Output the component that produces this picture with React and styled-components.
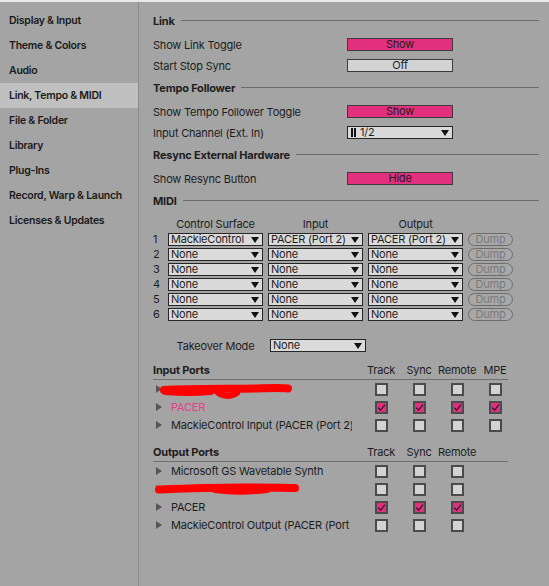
import React from "react";
import styled, { createGlobalStyle } from "styled-components";

const PINK = "#e2307e";

const GlobalStyle = createGlobalStyle`
  html, body {
    margin: 0;
    padding: 0;
    background: #a4a4a4;
  }
  body {
    font-family: Inter, "Liberation Sans", sans-serif;
    font-size: 11px;
    letter-spacing: -0.2px;
    color: #1d1d1d;
  }
  * { box-sizing: border-box; }
`;

const navItems = [
  "Display & Input",
  "Theme & Colors",
  "Audio",
  "Link, Tempo & MIDI",
  "File & Folder",
  "Library",
  "Plug-Ins",
  "Record, Warp & Launch",
  "Licenses & Updates",
];

const midiRows = [
  ["MackieControl", "PACER (Port 2)", "PACER (Port 2)"],
  ["None", "None", "None"],
  ["None", "None", "None"],
  ["None", "None", "None"],
  ["None", "None", "None"],
  ["None", "None", "None"],
];

const inputPorts = [
  { name: "", hidden: true, checks: [false, false, false, false] },
  { name: "PACER", pink: true, checks: [true, true, true, true] },
  { name: "MackieControl Input (PACER (Port 2))", checks: [false, false, false, false] },
];

const outputPorts = [
  { name: "Microsoft GS Wavetable Synth", checks: [false, false, false] },
  { name: "", hidden: true, checks: [false, false, false] },
  { name: "PACER", checks: [true, true, true] },
  { name: "MackieControl Output (PACER (Port 2))", checks: [false, false, false] },
];

const Page = styled.div`
  height: 100vh;
  display: flex;
  flex-direction: column;
`;

const TopStrip = styled.div`
  height: 2px;
  background: #e9e9e9;
`;

const Body = styled.div`
  flex: 1;
  display: flex;
`;

const Sidebar = styled.nav`
  width: 139px;
  padding-top: 6px;
  border-right: 1px solid #8c8c8c;
`;

const NavItem = styled.div`
  height: 25px;
  display: flex;
  align-items: center;
  padding-left: 9px;
  font-size: 10.5px;
  letter-spacing: -0.25px;
  font-weight: 600;
  color: #1a1a1a;
  background: ${(p) => (p.$active ? "#c0c0c0" : "transparent")};
`;

const Main = styled.main`
  flex: 1;
  padding: 7px 10px 0 14px;
`;

const SectionHead = styled.div`
  height: 25px;
  padding-bottom: 2px;
  display: flex;
  align-items: center;
  gap: 6px;
  font-weight: 700;
  &::after {
    content: "";
    flex: 1;
    height: 1px;
    background: #6a6a6a;
  }
`;

const SettingRow = styled.div`
  height: 21px;
  display: grid;
  grid-template-columns: 194px 106px;
  align-items: center;
`;

const Toggle = styled.div`
  height: 13px;
  border: 1px solid #3b3b3b;
  background: ${(p) => (p.$on ? PINK : "#d3d3d3")};
  display: flex;
  align-items: center;
  justify-content: center;
  line-height: 11px;
`;

const Select = styled.div`
  height: 13px;
  width: ${(p) => p.$width || "auto"};
  margin-left: ${(p) => p.$offset || 0};
  border: 1px solid #262626;
  background: #dadada;
  display: flex;
  align-items: center;
  padding: 0 3px 0 2px;
  line-height: 11px;
  white-space: nowrap;
`;

const SelectText = styled.span`
  flex: 1;
`;

const Arrow = styled.span`
  flex: none;
  width: 0;
  height: 0;
  margin-left: 2px;
  border-left: 4px solid transparent;
  border-right: 4px solid transparent;
  border-top: 6px solid #111;
`;

const Bars = styled.span`
  display: inline-flex;
  gap: 1px;
  margin: 0 4px 0 1px;
  span {
    width: 2px;
    height: 9px;
    background: #111;
  }
`;

const MidiHeads = styled.div`
  height: 19px;
  display: grid;
  grid-template-columns: 10px 95px 95px 95px 45px;
  column-gap: 5px;
  align-items: center;
  span {
    text-align: center;
  }
`;

const MidiGrid = styled.div`
  display: grid;
  grid-template-columns: 10px 95px 95px 95px 45px;
  grid-auto-rows: 13px;
  column-gap: 5px;
  row-gap: 2px;
  align-items: center;
`;

const RowNum = styled.span`
  line-height: 13px;
`;

const Dump = styled.div`
  height: 13px;
  border: 1px solid #6c6c6c;
  border-radius: 7px;
  color: #7a7a7a;
  background: #a8a8a8;
  display: flex;
  align-items: center;
  justify-content: center;
  line-height: 11px;
`;

const TakeoverRow = styled(MidiGrid)`
  margin-top: 18px;
`;

const CenterLabel = styled.span`
  text-align: center;
`;

const PortSection = styled.section`
  margin-top: ${(p) => p.$gap};
`;

const PortHead = styled.div`
  width: 355px;
  height: 19px;
  display: grid;
  grid-template-columns: 209px repeat(4, 38px);
  align-items: center;
  border-bottom: 1px solid #6f6f6f;
  span {
    text-align: center;
  }
`;

const PortTitle = styled.span`
  font-weight: 700;
  && {
    text-align: left;
  }
`;

const PortRow = styled.div`
  height: 18px;
  display: grid;
  grid-template-columns: 209px repeat(4, 38px);
  align-items: center;
`;

const PortName = styled.div`
  display: flex;
  align-items: center;
  max-width: 199px;
  white-space: nowrap;
  color: ${(p) => (p.$pink ? "#e83d8a" : "inherit")};
`;

// long port names are cut at the column edge
const PortLabel = styled.span`
  max-width: 181px;
  overflow-x: clip;
  overflow-y: visible;
`;

const Expander = styled.span`
  flex: none;
  width: 0;
  height: 0;
  margin: 0 9px 0 3px;
  border-top: 4px solid transparent;
  border-bottom: 4px solid transparent;
  border-left: 6px solid #555;
`;

const CheckCell = styled.div`
  display: flex;
  justify-content: center;
`;

const Box = styled.div`
  width: 13px;
  height: 13px;
  border: 2px solid #4b4b4b;
  background: ${(p) => (p.$checked ? PINK : "#d3d3d3")};
  display: flex;
  align-items: center;
  justify-content: center;
`;

const Scribble = styled.svg`
  flex: none;
  margin-left: ${(p) => p.$shift};
  overflow: visible;
`;

function Checkbox({ checked }) {
  return (
    <Box $checked={checked}>
      {checked && (
        <svg width="9" height="9" viewBox="0 0 9 9">
          <path d="M1.2 4.6 L3.6 7.2 L8 1.6" fill="none" stroke="#2a1222" strokeWidth="1.2" />
        </svg>
      )}
    </Box>
  );
}

function Dropdown({ children, width, offset }) {
  return (
    <Select $width={width} $offset={offset}>
      <SelectText>{children}</SelectText>
      <Arrow />
    </Select>
  );
}

// red marker strokes covering two device names
function InputScribble() {
  return (
    <Scribble $shift="-12px" width="136" height="18" viewBox="0 0 136 18">
      <path d="M5 10 C30 8.5, 70 9, 96 8.5 C110 8, 122 7.5, 129 8.5" stroke="#ff0000" strokeWidth="8" fill="none" strokeLinecap="round" />
      <path d="M6 12 C20 13, 40 13, 52 12" stroke="#ff0000" strokeWidth="6" fill="none" strokeLinecap="round" />
      <path d="M58 12 C64 17, 72 17, 78 13" stroke="#ff0000" strokeWidth="6" fill="none" strokeLinecap="round" />
    </Scribble>
  );
}

function OutputScribble() {
  return (
    <Scribble $shift="-16px" width="146" height="18" viewBox="0 0 146 18">
      <path d="M4 9.5 C30 8.5, 60 7.5, 90 7.5 C110 7.5, 128 7.5, 140 8" stroke="#ff0000" strokeWidth="8" fill="none" strokeLinecap="round" />
      <path d="M60 9 C75 11, 95 11, 112 9" stroke="#ff0000" strokeWidth="8" fill="none" strokeLinecap="round" />
    </Scribble>
  );
}

function PortList({ title, ports, columns, gap, Hidden }) {
  return (
    <PortSection $gap={gap}>
      <PortHead>
        <PortTitle>{title}</PortTitle>
        {columns.map((c) => (
          <span key={c}>{c}</span>
        ))}
      </PortHead>
      {ports.map((p, i) => (
        <PortRow key={i}>
          <PortName $pink={p.pink}>
            <Expander />
            {p.hidden ? <Hidden /> : <PortLabel>{p.name}</PortLabel>}
          </PortName>
          {p.checks.map((c, j) => (
            <CheckCell key={j}>
              <Checkbox checked={c} />
            </CheckCell>
          ))}
        </PortRow>
      ))}
    </PortSection>
  );
}

const App = () => {
  return (
    <Page>
      <GlobalStyle />
      <TopStrip />
      <Body>
        <Sidebar>
          {navItems.map((n) => (
            <NavItem key={n} $active={n === "Link, Tempo & MIDI"}>
              {n}
            </NavItem>
          ))}
        </Sidebar>
        <Main>
          <SectionHead>Link</SectionHead>
          <SettingRow>
            <span>Show Link Toggle</span>
            <Toggle $on>Show</Toggle>
          </SettingRow>
          <SettingRow>
            <span>Start Stop Sync</span>
            <Toggle>Off</Toggle>
          </SettingRow>

          <SectionHead>Tempo Follower</SectionHead>
          <SettingRow>
            <span>Show Tempo Follower Toggle</span>
            <Toggle $on>Show</Toggle>
          </SettingRow>
          <SettingRow>
            <span>Input Channel (Ext. In)</span>
            <Select>
              <Bars>
                <span />
                <span />
              </Bars>
              <SelectText>1/2</SelectText>
              <Arrow />
            </Select>
          </SettingRow>

          <SectionHead>Resync External Hardware</SectionHead>
          <SettingRow>
            <span>Show Resync Button</span>
            <Toggle $on>Hide</Toggle>
          </SettingRow>

          <SectionHead>MIDI</SectionHead>
          <MidiHeads>
            <span />
            <span>Control Surface</span>
            <span>Input</span>
            <span>Output</span>
          </MidiHeads>
          <MidiGrid>
            {midiRows.map((r, i) => (
              <React.Fragment key={i}>
                <RowNum>{i + 1}</RowNum>
                <Dropdown>{r[0]}</Dropdown>
                <Dropdown>{r[1]}</Dropdown>
                <Dropdown>{r[2]}</Dropdown>
                <Dump>Dump</Dump>
              </React.Fragment>
            ))}
          </MidiGrid>

          <TakeoverRow>
            <span />
            <CenterLabel>Takeover Mode</CenterLabel>
            <Dropdown width="96px" offset="2px">None</Dropdown>
          </TakeoverRow>

          <PortList
            title="Input Ports"
            ports={inputPorts}
            columns={["Track", "Sync", "Remote", "MPE"]}
            gap="9px"
            Hidden={InputScribble}
          />
          <PortList
            title="Output Ports"
            ports={outputPorts}
            columns={["Track", "Sync", "Remote"]}
            gap="9px"
            Hidden={OutputScribble}
          />
        </Main>
      </Body>
    </Page>
  );
};

export default App;
